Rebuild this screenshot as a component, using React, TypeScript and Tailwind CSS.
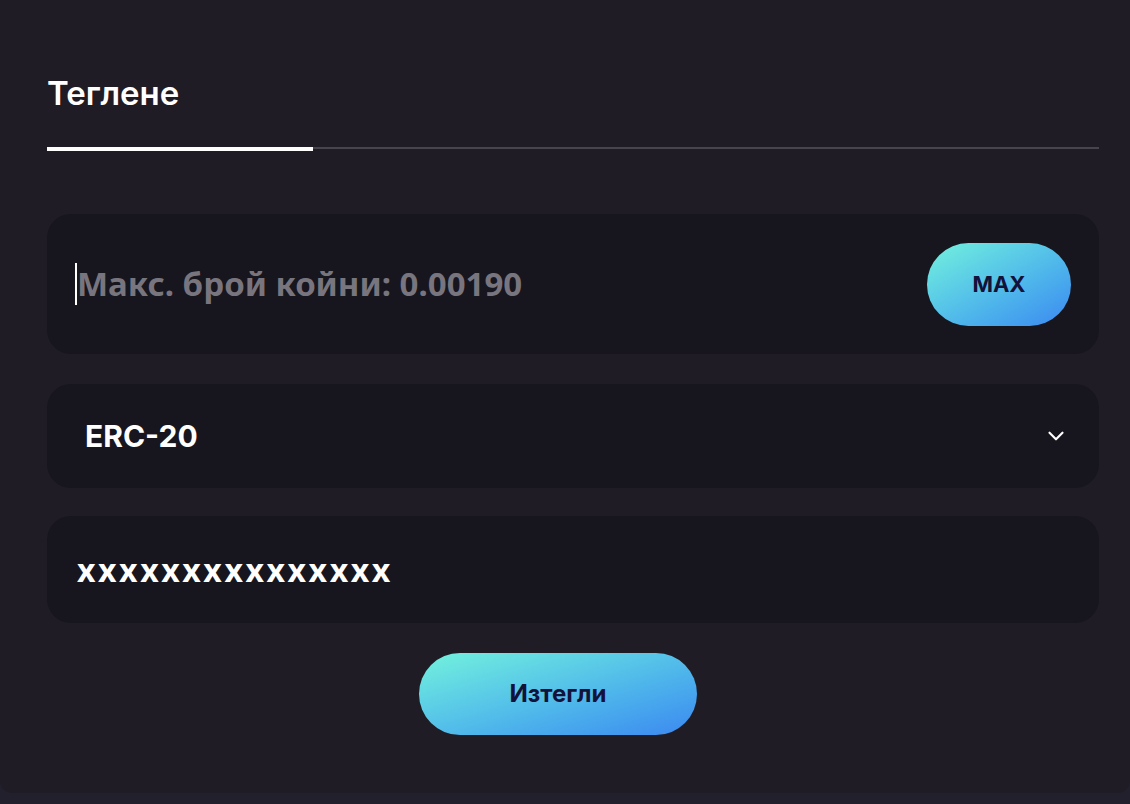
import { ChevronDown } from "lucide-react";

export default function App() {
  return (
    <div className="min-h-screen bg-[#23202d] font-['Inter',sans-serif]">
      <div className="h-[793px] rounded-b-[12px] bg-[#1f1c25] pl-[47px] pr-[31px] pt-[74px]">
        {/* Tabs */}
        <h2 className="text-[33px] font-semibold leading-[38px] text-white">Теглене</h2>
        <div className="mt-[35px] flex items-start">
          <div className="h-[4px] w-[266px] bg-white" />
          <div className="h-[2px] flex-1 bg-[#47444e]" />
        </div>

        {/* Amount */}
        <div className="mt-[63px] flex h-[140px] items-center justify-between rounded-[24px] bg-[#17151e] pl-[28px] pr-[28px]">
          <div className="flex items-center">
            <span className="h-[42px] w-[2px] bg-white" />
            <span className="font-['Noto_Sans',sans-serif] text-[33px] font-bold text-[#78757f]">
              Макс. брой койни: 0.00190
            </span>
          </div>
          <button className="h-[83px] w-[144px] rounded-full bg-gradient-to-br from-[#74f2dc] to-[#3d88f0] text-[22px] font-bold text-[#13123a]">
            MAX
          </button>
        </div>

        {/* Network */}
        <div className="mt-[30px] flex h-[104px] items-center justify-between rounded-[24px] bg-[#17151e] pl-[38px] pr-[30px]">
          <span className="text-[30px] font-bold text-white">ERC-20</span>
          <ChevronDown className="h-[26px] w-[26px] text-white" strokeWidth={2} />
        </div>

        {/* Address */}
        <div className="mt-[28px] flex h-[107px] items-center rounded-[24px] bg-[#17151e] pl-[30px]">
          <span className="font-['Noto_Sans',sans-serif] text-[32px] font-bold tracking-[0.08em] text-white">
            xxxxxxxxxxxxxxx
          </span>
        </div>

        <div className="mt-[30px] flex pl-[372px]">
          <button className="h-[82px] w-[278px] rounded-full bg-gradient-to-br from-[#74f2dc] to-[#3d88f0] text-[24px] font-bold text-[#13123a]">
            Изтегли
          </button>
        </div>
      </div>
    </div>
  );
}
